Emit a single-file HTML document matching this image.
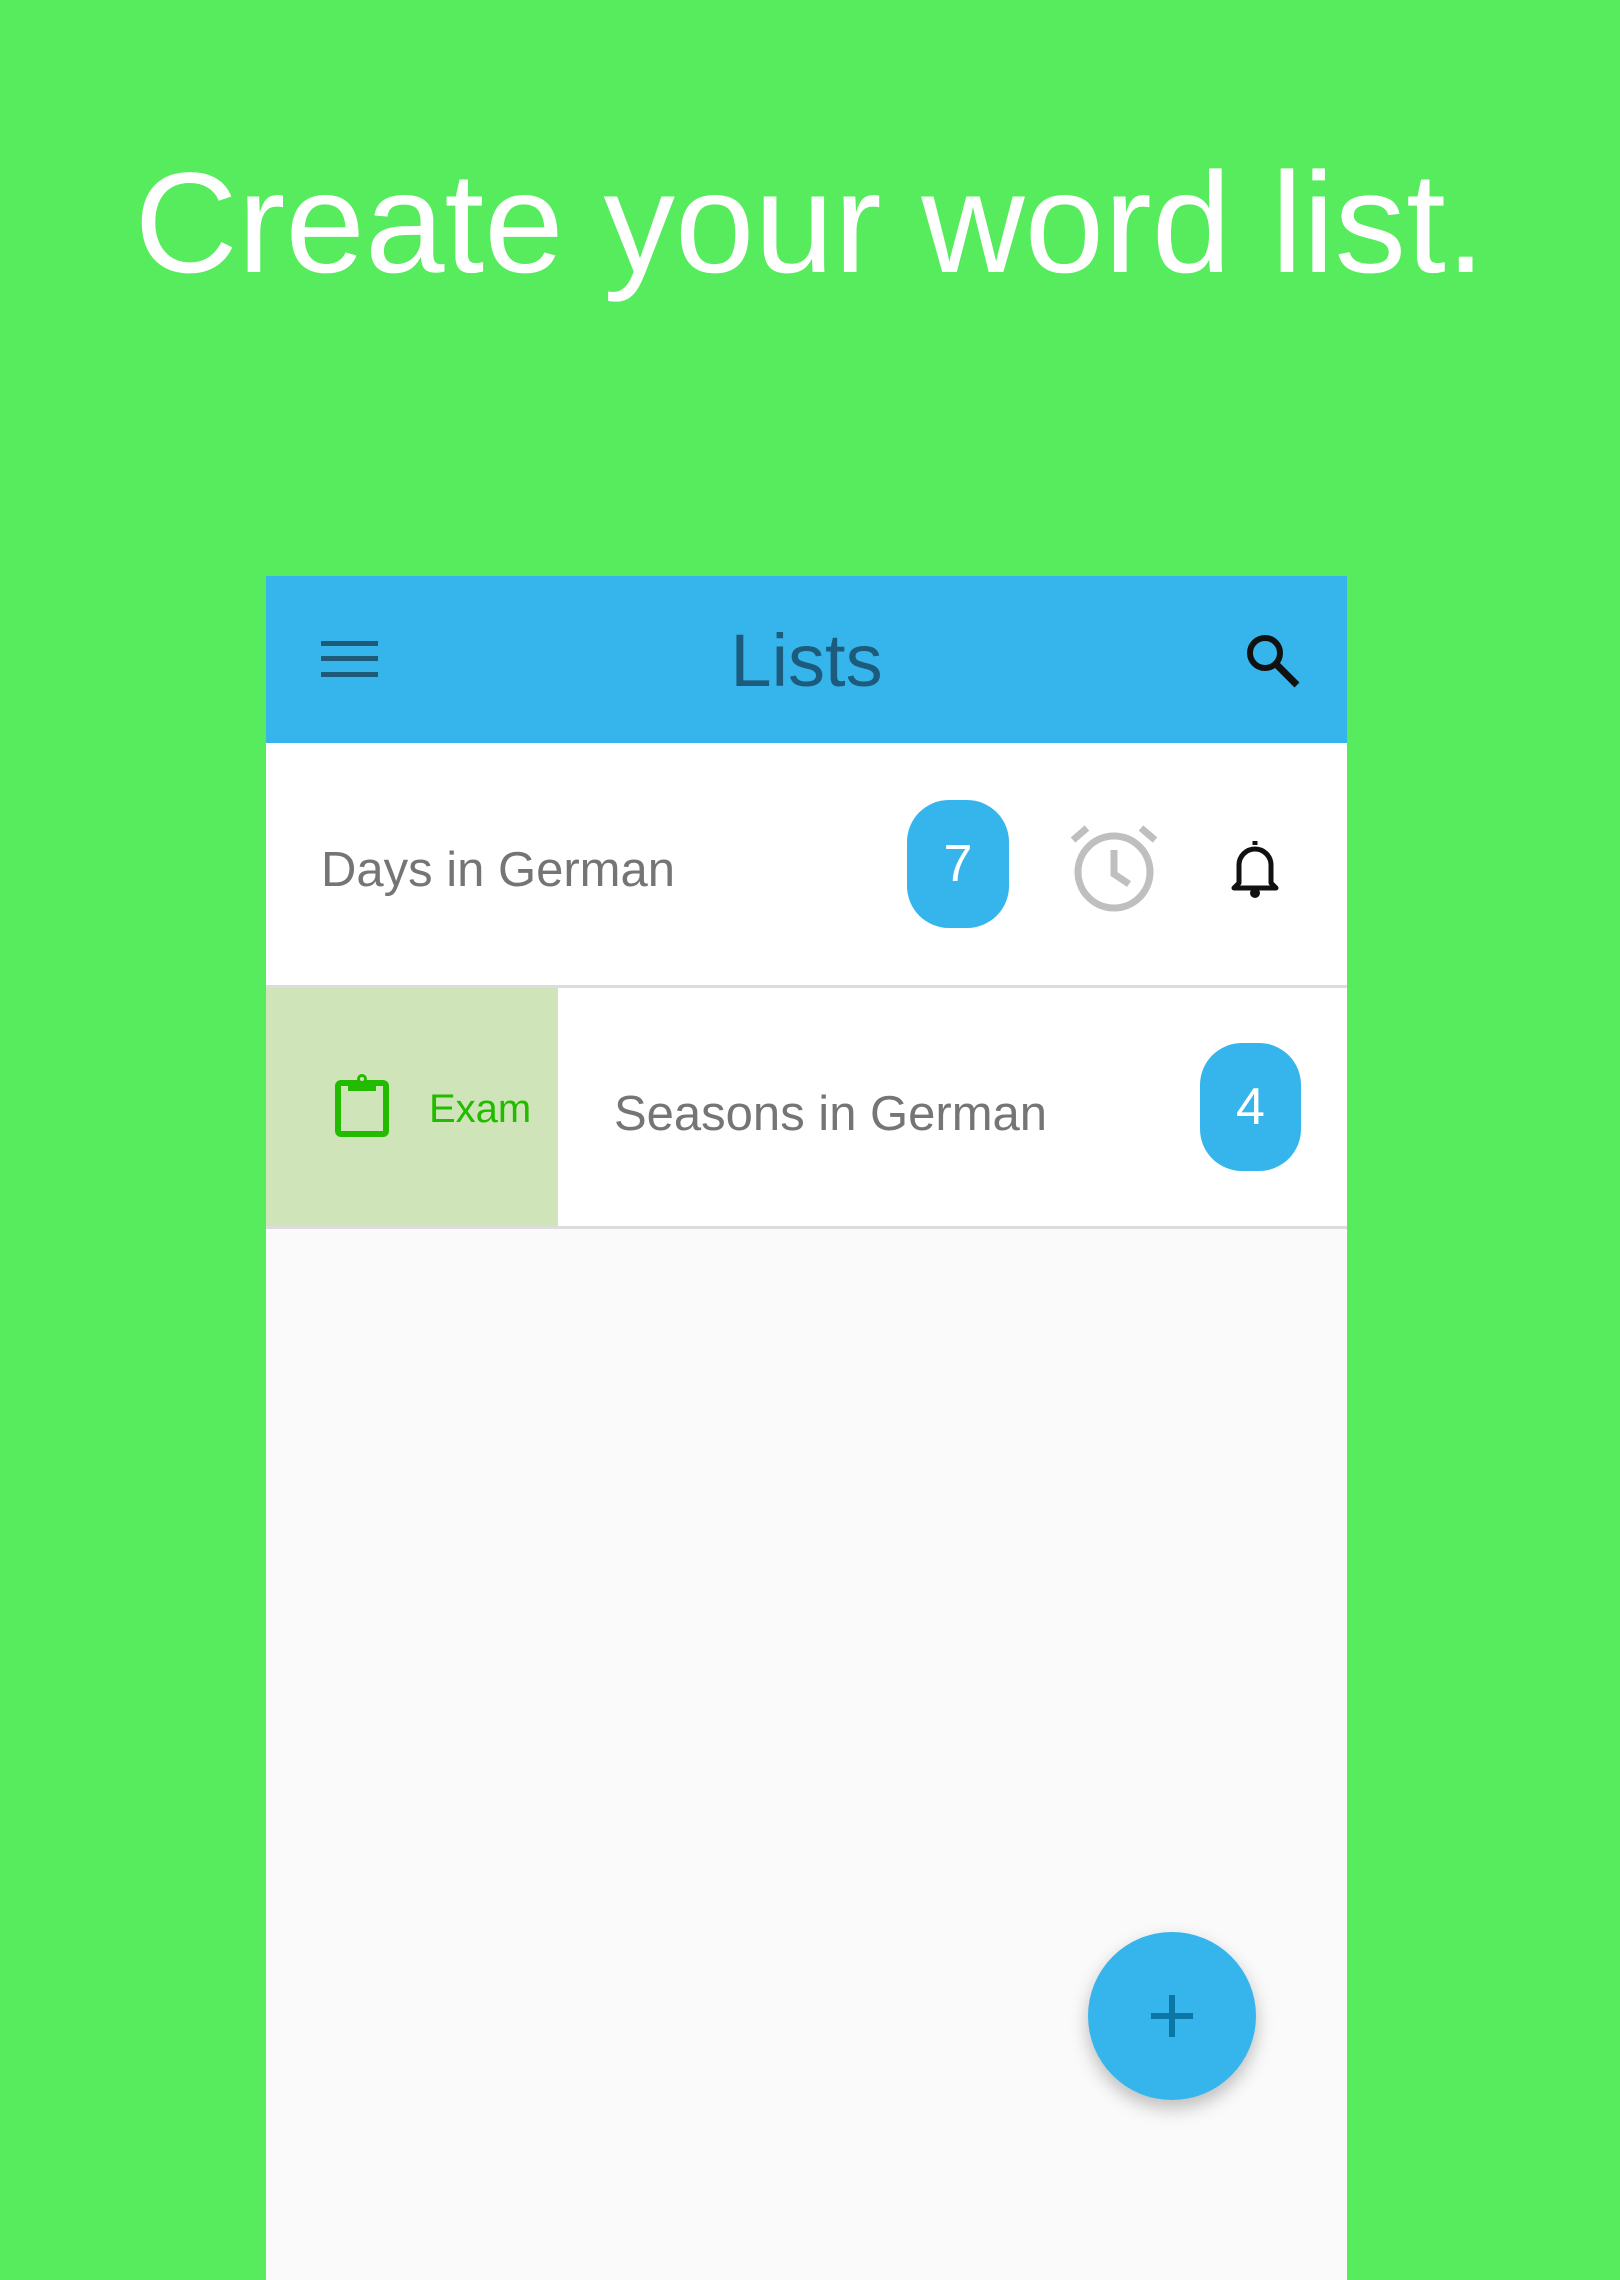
<!DOCTYPE html>
<html><head><meta charset="utf-8"><style>
*{margin:0;padding:0;box-sizing:border-box}
body{width:1620px;height:2280px;background:#57ec5d;position:relative;overflow:hidden;font-family:"Liberation Sans",sans-serif}
.abs{position:absolute}
h1{position:absolute;left:0;width:1620px;top:152px;text-align:center;color:#fff;font-weight:normal;font-size:143px;line-height:1}
.phone{left:266px;top:576px;width:1081px;height:1704px;background:#fafafa}
.hdr{left:0;top:0;width:1081px;height:167px;background:#35b5ec}
.row{left:0;width:1081px;background:#fff}
.txt{color:#757575;font-size:49px;line-height:1}
.badge{background:#35b5ec;color:#fff;border-radius:42px;text-align:center;font-size:52px;}
.div{left:0;width:1081px;height:3px;background:#dcdcdc}
</style></head><body>
<h1>Create your word list.</h1>
<div class="abs phone">
 <div class="abs hdr">
  <svg class="abs" style="left:55px;top:63px" width="57" height="40" viewBox="0 0 57 40"><g fill="#1e5a78"><rect x="0" y="2" width="57" height="5"/><rect x="0" y="17" width="57" height="5"/><rect x="0" y="33" width="57" height="5"/></g></svg>
  <div class="abs" style="left:0;width:1081px;top:48px;text-align:center;font-size:74px;color:#1c5b7b;line-height:1">Lists</div>
  <svg class="abs" style="left:978px;top:56px" width="58" height="58" viewBox="0 0 58 58"><circle cx="21" cy="21" r="15" fill="none" stroke="#111" stroke-width="6"/><line x1="32" y1="32" x2="53" y2="53" stroke="#111" stroke-width="7"/></svg>
 </div>
 <div class="abs row" style="top:167px;height:242px"></div>
 <div class="abs txt" style="left:55px;top:270px">Days in German</div>
 <div class="abs badge" style="left:641px;top:224px;width:102px;height:128px;line-height:128px">7</div>
 <svg class="abs" style="left:803px;top:246px" width="90" height="90" viewBox="0 0 90 90"><g fill="none" stroke="#bfbfbf" stroke-width="7"><circle cx="45" cy="50" r="36"/><path d="M45 28V52L60 62"/><path d="M4 18L18 6M86 18L72 6"/></g></svg>
 <svg class="abs" style="left:963px;top:263px" width="52" height="60" viewBox="0 0 52 60"><path d="M26 2v4M10 44V26a16 16 0 0 1 32 0v18l5 5H5z" fill="none" stroke="#111" stroke-width="5" stroke-linejoin="round"/><circle cx="26" cy="54" r="5" fill="#111"/></svg>
 <div class="abs div" style="top:409px"></div>
 <div class="abs row" style="top:412px;height:238px"></div>
 <div class="abs" style="left:0;top:412px;width:292px;height:238px;background:#cfe4b8"></div>
 <svg class="abs" style="left:68px;top:497px" width="56" height="64" viewBox="0 0 56 64"><rect x="4" y="10" width="48" height="51" rx="3" fill="none" stroke="#22bb00" stroke-width="6"/><rect x="14" y="8" width="28" height="10" fill="#22bb00"/><circle cx="28" cy="6" r="5" fill="#22bb00"/><circle cx="28" cy="6" r="2" fill="#cfe4b8"/></svg>
 <div class="abs" style="left:163px;top:513px;color:#22bb00;font-size:40px;line-height:1">Exam</div>
 <div class="abs txt" style="left:348px;top:514px">Seasons in German</div>
 <div class="abs badge" style="left:934px;top:467px;width:101px;height:128px;line-height:128px">4</div>
 <div class="abs div" style="top:650px"></div>
 <div class="abs" style="left:822px;top:1356px;width:168px;height:168px;border-radius:50%;background:#35b5ec;box-shadow:0 8px 18px rgba(0,0,0,.25)">
  <div class="abs" style="left:63px;top:81px;width:42px;height:6px;background:#0a77a6"></div>
  <div class="abs" style="left:81px;top:63px;width:6px;height:42px;background:#0a77a6"></div>
 </div>
</div>
</body></html>
